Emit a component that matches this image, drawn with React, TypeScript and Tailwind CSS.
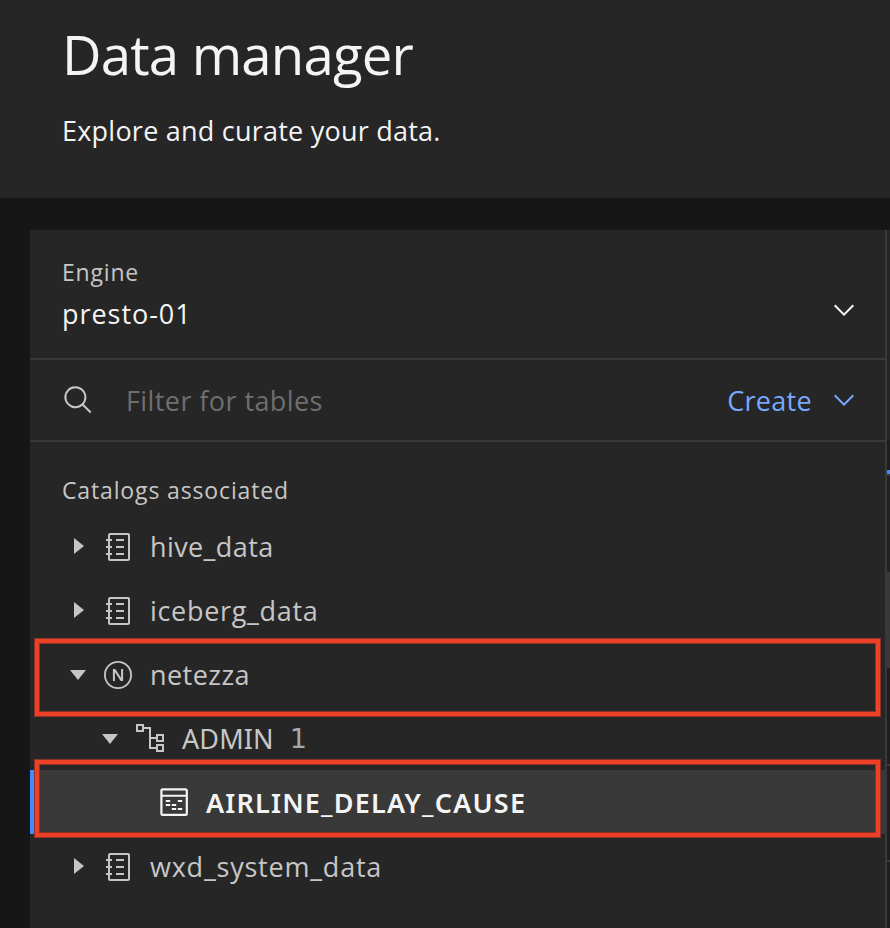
import type { ReactNode } from "react";

const Chevron = ({ className }: { className: string }) => (
  <svg className={className} width="32" height="32" viewBox="0 0 16 16" fill="currentColor">
    <path d="M8 11L3 6 3.7 5.3 8 9.6 12.3 5.3 13 6z" />
  </svg>
);

const SearchIcon = () => (
  <svg className="text-[#c6c6c6]" width="32" height="32" viewBox="-0.4 -0.2 32 32" fill="currentColor">
    <path d="M29,27.5859l-7.5521-7.5521a11.0177,11.0177,0,1,0-1.4141,1.4141L27.5859,29ZM4,13a9,9,0,1,1,9,9A9.01,9.01,0,0,1,4,13Z" />
  </svg>
);

const Caret = ({ open }: { open?: boolean }) => (
  <svg className="shrink-0" width="32" height="32" viewBox="0 0 32 32" fill="currentColor">
    {open ? <path d="M24 12 16 22 8 12z" /> : <path d="M12 8 22 16 12 24z" />}
  </svg>
);

const CatalogIcon = () => (
  <svg className="mt-0.5 shrink-0" width="32" height="32" viewBox="0 0 32 32" fill="currentColor">
    <path d="M26,2H8A2,2,0,0,0,6,4V8H4v2H6v5H4v2H6v5H4v2H6v4a2,2,0,0,0,2,2H26a2,2,0,0,0,2-2V4A2,2,0,0,0,26,2Zm0,26H8V24h2V22H8V17h2V15H8V10h2V8H8V4H26Z" />
    <path d="M14 8h8v2h-8zM14 15h8v2h-8zM14 22h8v2h-8z" />
  </svg>
);

const NetezzaIcon = () => (
  <svg className="mt-0.5 shrink-0" width="32" height="32" viewBox="0 0 32 32" fill="none" stroke="currentColor">
    <circle cx="16" cy="16" r="13.1" strokeWidth="1.8" />
    <path d="M11.9 22V10" strokeWidth="2" />
    <path d="M20.1 22V10" strokeWidth="2" />
    <path d="M10.9 10h2.4L21.1 22h-2.4z" fill="currentColor" stroke="none" />
  </svg>
);

const SchemaIcon = () => (
  <svg className="shrink-0" width="32" height="32" viewBox="0 0 32 32" fill="none" stroke="currentColor" strokeWidth="2">
    <path d="M3 3h6v6H3zM23 13h6v6h-6zM23 23h6v6h-6zM9 6h7v20h7M16 16h7" />
  </svg>
);

const TableIcon = () => (
  <svg className="shrink-0" width="32" height="32" viewBox="0 0 32 32" fill="none" stroke="currentColor" strokeWidth="2">
    <rect x="3.4" y="3.4" width="25.4" height="25.4" rx="1.4" strokeWidth="2.2" />
    <path d="M3 9.8h26M7.8 15h4.4M19.8 15h4.4M7.8 19h4.4M13.8 19h4.4M13.8 23h4.4M19.8 23h4.4" />
  </svg>
);

const Row = ({ children, className }: { children: ReactNode; className: string }) => (
  <div className={`flex h-16 items-center ${className}`}>{children}</div>
);

const body = "text-[27px] leading-[36px] whitespace-pre";
const label = "ml-4 pt-0.5 text-[27px] leading-[36px] whitespace-pre";
const highlight =
  "absolute left-[35px] h-[77px] w-[845px] border-4 border-[#ee4026] shadow-[0_0_0_1px_#8b3326,inset_0_0_0_1px_#8b3326]";

export default function App() {
  return (
    <div className="relative h-[928px] w-[890px] overflow-hidden bg-[#161616] font-['Open_Sans',sans-serif] text-[#c6c6c6]">
      <header className="h-[198px] bg-[#262626] pt-[18px] pl-[62px] text-[#f4f4f4]">
        <h1 className="h-[72px] text-[54.5px] leading-[72px] tracking-[-0.8px] whitespace-pre">Data manager</h1>
        <p className={`mt-[23px] tracking-[0.23px] ${body}`}>Explore and curate your data.</p>
      </header>

      <div className="flex h-[730px] pt-8 pl-[30px]">
        <main className="h-[698px] w-[857px] shrink-0 border-r-2 border-[#393939] bg-[#262626]">
          <section className="flex h-[130px] justify-between border-b-2 border-[#393939] pl-8">
            <div className="pt-[25px]">
              <div className="h-[34px] text-[23px] leading-[34px] tracking-[0.8px] whitespace-pre">Engine</div>
              <div className={`mt-[7px] tracking-[0.95px] text-[#f4f4f4] ${body}`}>presto-01</div>
            </div>
            <Chevron className="mt-16 mr-[25px] text-[#f4f4f4]" />
          </section>

          <section className="flex h-[82px] items-center border-b-2 border-[#393939] pl-8">
            <SearchIcon />
            <span className={`ml-8 pt-0.5 tracking-[0.42px] text-[#6f6f6f] ${body}`}>Filter for tables</span>
            <span className={`ml-auto pt-0.5 tracking-[0.3px] text-[#78a9ff] ${body}`}>Create</span>
            <Chevron className="mr-[25px] ml-4 text-[#78a9ff]" />
          </section>

          <h2 className="h-[72px] pt-[31px] pl-8 text-[23px] leading-[34px] tracking-[0.86px] whitespace-pre">Catalogs associated</h2>
          <Row className="pl-8"><Caret /><span className="ml-2"><CatalogIcon /></span><span className={`tracking-[0.4px] ${label}`}>hive_data</span></Row>
          <Row className="pl-8"><Caret /><span className="ml-2"><CatalogIcon /></span><span className={`tracking-[0.68px] ${label}`}>iceberg_data</span></Row>
          <Row className="pl-8"><Caret open /><span className="ml-2"><NetezzaIcon /></span><span className={`tracking-[0.45px] ${label}`}>netezza</span></Row>
          <Row className="pl-16">
            <Caret open /><span className="ml-2"><SchemaIcon /></span>
            <span className={`font-['Noto_Sans',sans-serif] tracking-[0.1px] ${label}`}>ADMIN</span>
            <span className={`font-['DejaVu_Sans',sans-serif] text-[#a8a8a8] ${label}`}>1</span>
          </Row>
          <Row className="border-l-[6px] border-[#4589ff] bg-[#393939] pl-[122px] text-[#f4f4f4]">
            <TableIcon />
            <span className={`font-['Noto_Sans',sans-serif] font-semibold tracking-[1.2px] ${label}`}>AIRLINE_DELAY_CAUSE</span>
          </Row>
          <Row className="pl-8"><Caret /><span className="ml-2"><CatalogIcon /></span><span className={`tracking-[0.78px] ${label}`}>wxd_system_data</span></Row>
        </main>
        <aside className="flex flex-1 flex-col bg-[#1e1e1e]">
          <div className="h-[210px] bg-[#262626]" />
          <div className="mt-[30px] h-1 bg-[#4589ff]" />
          <div className="h-0.5 bg-[#393939]" />
          <div className="h-24 bg-[#222222]" />
          <div className="h-24 bg-[#393939]" />
          <div className="mt-24 h-0.5 bg-[#393939]" />
          <div className="mt-[94px] h-0.5 bg-[#393939]" />
        </aside>
      </div>

      <div className={`top-[639px] ${highlight}`} />
      <div className={`top-[760px] ${highlight}`} />
    </div>
  );
}
